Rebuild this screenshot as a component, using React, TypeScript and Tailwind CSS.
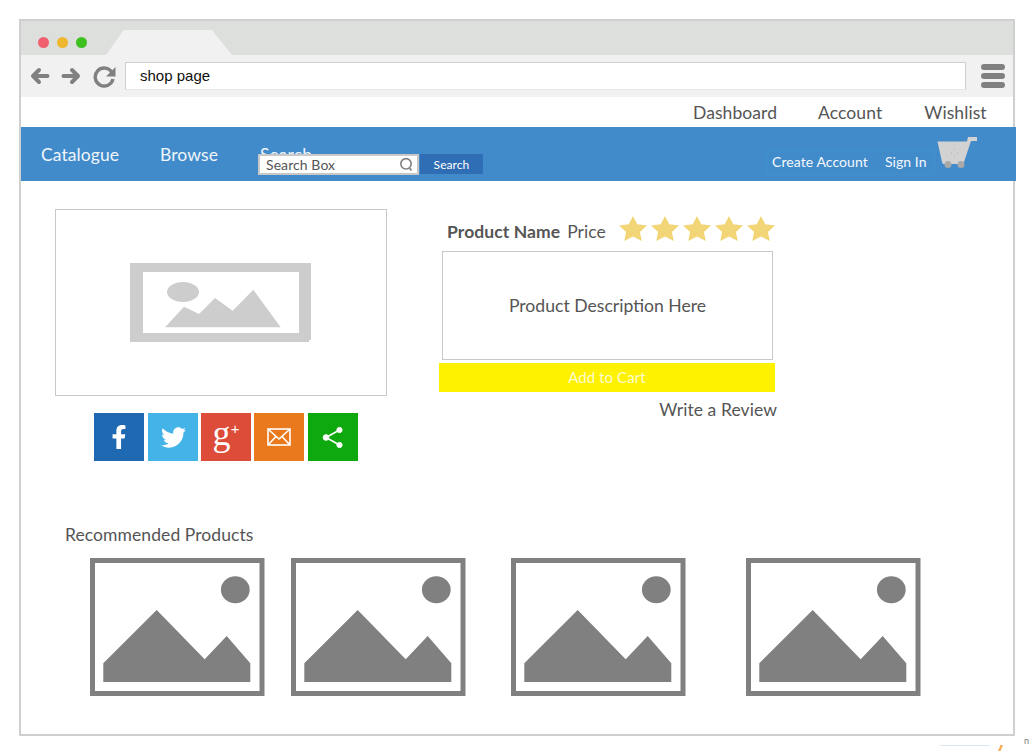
import React from 'react';
import { FaFacebookF, FaTwitter } from 'react-icons/fa';

const starPoints = '14,0 18.2,8.7 28,10 20.9,16.6 22.8,26 14,21.4 5.2,26 7.1,16.6 0,10 9.8,8.7';
const thumbGaps = ['ml-[69px]', 'ml-[26px]', 'ml-[45px]', 'ml-[60px]'];

function Thumb({ className }: { className: string }) {
  return (
    <svg className={className} width="175" height="138" viewBox="0 0 175 138">
      <rect x="2.5" y="2.5" width="169.5" height="133" fill="#fff" stroke="#808080" strokeWidth="5" />
      <ellipse cx="145.3" cy="31.7" rx="14.4" ry="13.5" fill="#808080" />
      <polygon points="13.3,105.3 66.7,52 114.7,101.3 136.7,78 160.3,105.3 160.3,124 13.3,124" fill="#808080" />
    </svg>
  );
}

function ShareTile({ color, className, children }: { color: string; className: string; children: React.ReactNode }) {
  return <div className={`${color} ${className} h-[48px] flex items-center justify-center text-white`}>{children}</div>;
}

export default function App() {
  return (
    <div className="relative w-[1035px] h-[755px] bg-white overflow-hidden pl-[19px] pt-[19px] font-['Lato',sans-serif] text-[#555] tracking-[0.08px]">
      <div className="w-[996px] h-[717px] border-2 border-[#cfcfcf]">
        {/* browser chrome */}
        <div className="h-[34px] bg-[#dddfdd] flex pl-[17px]">
          <div className="flex items-center gap-2 h-[42px]">
            <span className="w-[11px] h-[11px] rounded-full bg-[#f0606f]" />
            <span className="w-[11px] h-[11px] rounded-full bg-[#eeb72d]" />
            <span className="w-[11px] h-[11px] rounded-full bg-[#3cc11e]" />
          </div>
          <div className="ml-[19px] mt-[9px] w-[126px] h-[25px] bg-[#f1f1f1] [clip-path:polygon(14%_0,84%_0,100%_100%,0_100%)]" />
        </div>
        <div className="h-[42px] bg-[#f1f1f1] flex items-center pl-[9px]">
          <svg width="20" height="18" viewBox="0 0 20 18" fill="none" stroke="#808080" strokeWidth="4" strokeLinecap="round" strokeLinejoin="round">
            <path d="M17.5 9H3M9 3L3 9l6 6" />
          </svg>
          <svg className="ml-[11px]" width="20" height="18" viewBox="0 0 20 18" fill="none" stroke="#808080" strokeWidth="4" strokeLinecap="round" strokeLinejoin="round">
            <path d="M2.5 9H17M11 3l6 6-6 6" />
          </svg>
          <svg className="ml-[12px] mt-[2px]" width="23" height="22" viewBox="0 0 23 22" fill="none">
            <path d="M19 6.5A9 9 0 1 0 20 13" stroke="#808080" strokeWidth="3.4" />
            <polygon points="22.5,1 22.5,10.5 13,10.5" fill="#808080" />
          </svg>
          <div className="ml-[9px] w-[841px] h-[28px] bg-white border border-[#cfcfcf] border-b-[#e6e6e6] flex items-center pl-[14px] font-['Liberation_Sans',sans-serif] text-[15px] text-[#111] tracking-normal">
            shop page
          </div>
          <div className="ml-[15px] flex flex-col gap-[3px]">
            <span className="w-[24px] h-[6px] rounded-[3px] bg-[#808080]" />
            <span className="w-[24px] h-[6px] rounded-[3px] bg-[#808080]" />
            <span className="w-[24px] h-[6px] rounded-[3px] bg-[#808080]" />
          </div>
        </div>

        {/* top links */}
        <div className="h-[30px] flex items-center text-[17.5px] pl-[672px] pt-[2px]">
          <span>Dashboard</span>
          <span className="ml-[41px]">Account</span>
          <span className="ml-[42px]">Wishlist</span>
        </div>

        {/* blue nav */}
        <div className="relative w-[995px] h-[54px] bg-[#428bca] flex text-white">
          <div className="flex text-[17.5px] pl-[20px] pt-[16px] leading-[24px] text-[#eef5fb]">
            <span>Catalogue</span>
            <span className="ml-[41px]">Browse</span>
            <span className="ml-[42px]">Search</span>
          </div>
          <div className="absolute left-[237px] top-[27px] flex">
            <div className="w-[161px] h-[21px] bg-white border-2 border-[#c8c8c8] flex items-center justify-between pl-[6px] pr-[3px] text-[14px] text-[#555]">
              <span>Search Box</span>
              <svg width="15" height="15" viewBox="0 0 15 15" fill="none" stroke="#808080" strokeWidth="1.6">
                <circle cx="7" cy="6.8" r="5.2" />
                <path d="M10.5 11l2 2.5" />
              </svg>
            </div>
            <div className="ml-[1px] w-[63px] h-[20px] bg-[#2f6db5] flex items-center justify-center pt-[1px] text-[12px] text-white">Search</div>
          </div>
          <div className="absolute left-[746px] top-[24px] w-[168px] h-[24px] border border-[#3f92c9] flex items-center pl-[4px] pb-[4px] text-[14px] text-[#f4f8fc]">
            <span>Create Account</span>
            <span className="ml-[17px]">Sign In</span>
          </div>
          <svg className="absolute left-[916px] top-[10px]" width="41" height="32" viewBox="0 0 41 32">
            <polygon points="0.5,4.5 30,4.5 31,0 40,0 40,4 34,4 27,25 26,27 6,27 5,25" fill="#d2d2d2" />
            <circle cx="11" cy="27.5" r="3.5" fill="#a9a9a9" />
            <circle cx="24" cy="27.5" r="3.5" fill="#a9a9a9" />
            <path d="M17 12h1M14 16h1M20 16h1M17 19h1" stroke="#9fb8cf" strokeWidth="1" />
          </svg>
        </div>

        {/* product */}
        <div className="flex pl-[34px] pt-[28px]">
          <div className="w-[332px]">
            <div className="w-[332px] h-[187px] border border-[#c8c8c8] flex items-center justify-center">
              <svg className="-ml-[1px]" width="181" height="79" viewBox="0 0 181 79">
                <path fillRule="evenodd" d="M0 0h181v77h-2v2H0zM13 9v61h156V9z" fill="#cdcdcd" />
                <ellipse cx="53" cy="29" rx="16" ry="10" fill="#cdcdcd" />
                <polygon points="35,64.3 54,43.7 69,51 85,35 102.7,47.7 123.3,26.7 150.7,64.3" fill="#cdcdcd" />
              </svg>
            </div>
            <div className="flex pl-[39px] mt-[17px]">
              <ShareTile color="bg-[#1f69b3]" className="w-[50px]">
                <FaFacebookF size={24} />
              </ShareTile>
              <ShareTile color="bg-[#44b3e7]" className="w-[50px] ml-[4px]">
                <FaTwitter size={25} />
              </ShareTile>
              <ShareTile color="bg-[#dd4b39]" className="w-[50px] ml-[3px]">
                <span className="font-['Liberation_Serif',serif] text-[36px] leading-none -mt-[9px]">g</span>
                <span className="font-['Liberation_Sans',sans-serif] text-[15px] leading-none -mt-[17px]">+</span>
              </ShareTile>
              <ShareTile color="bg-[#ea781d]" className="w-[50px] ml-[3px]">
                <svg width="24" height="18" viewBox="0 0 24 18" fill="none" stroke="#fff" strokeWidth="1.6">
                  <rect x="1" y="1" width="22" height="16" />
                  <path d="M1.5 1.5L12 11l10.5-9.5M1.5 16.5l7.5-8M22.5 16.5l-7.5-8" />
                </svg>
              </ShareTile>
              <ShareTile color="bg-[#0ea90e]" className="w-[50px] ml-[4px]">
                <svg width="22" height="23" viewBox="0 0 22 23" fill="#fff" stroke="#fff">
                  <path d="M4 11.5L17.5 4M4 11.5L17.5 19" strokeWidth="1.6" />
                  <circle cx="4" cy="11.5" r="2.8" />
                  <circle cx="17.5" cy="4" r="2.6" />
                  <circle cx="17.5" cy="19" r="2.6" />
                </svg>
              </ShareTile>
            </div>
          </div>

          <div className="ml-[52px] w-[338px]">
            <div className="h-[42px] flex items-start pl-[8px]">
              <span className="mt-[12px] text-[17.5px] leading-[22px] font-bold">Product Name</span>
              <span className="mt-[12px] ml-[7px] text-[17.5px] leading-[22px]">Price</span>
              <div className="ml-[13px] mt-[7px] flex gap-[4px]">
                {[0, 1, 2, 3, 4].map(i => (
                  <svg key={i} width="28" height="25" viewBox="0 0 28 26" preserveAspectRatio="none">
                    <polygon points={starPoints} fill="#f2d577" />
                  </svg>
                ))}
              </div>
            </div>
            <div className="ml-[3px] w-[331px] h-[109px] border border-[#c8c8c8] flex items-center justify-center pt-[1px] text-[17.6px] tracking-normal">
              Product Description Here
            </div>
            <div className="mt-[3px] w-[336px] h-[29px] bg-[#fff200] flex items-center justify-center text-[15px] text-[#fdfbd0]">
              Add to Cart
            </div>
            <div className="mt-[7px] text-right text-[17.5px] leading-[22px]">Write a Review</div>
          </div>
        </div>

        {/* recommended */}
        <div className="mt-[63px] pl-[44px] text-[17.5px] leading-[22px]">Recommended Products</div>
        <div className="flex mt-[12px]">
          {thumbGaps.map(gap => (
            <Thumb key={gap} className={gap} />
          ))}
        </div>
      </div>

      {/* clipped watermark at the bottom edge */}
      <div className="absolute left-[998px] top-[745px] w-[5px] h-[6px] bg-[#f8ab55] [clip-path:polygon(50%_0,100%_0,50%_100%,0_100%)]" />
      <div className="absolute left-[940px] top-[745px] w-[50px] h-[1px] bg-[#dbe8f3]" />
      <span className="absolute left-[1024px] top-[736px] text-[9px] leading-[10px] text-[#777]">n</span>
    </div>
  );
}
